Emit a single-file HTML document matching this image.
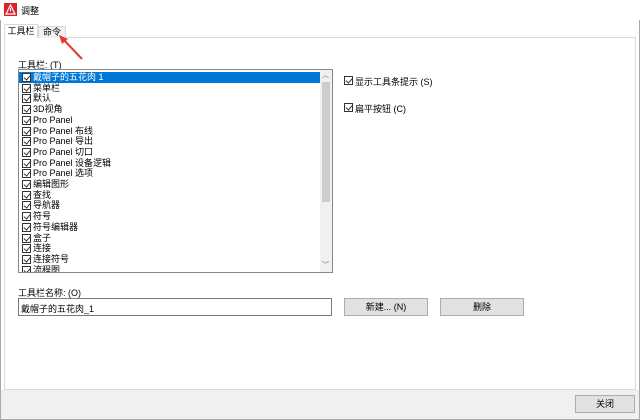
<!DOCTYPE html>
<html><head><meta charset="utf-8"><style>
*{margin:0;padding:0;box-sizing:border-box}
body{width:640px;height:420px;background:#fff;font-family:"Liberation Sans","Noto Sans CJK SC",sans-serif;font-size:9px;color:#000;position:relative;overflow:hidden}
.a{position:absolute;white-space:nowrap}
.cb{position:absolute;width:9px;height:9px;border:1px solid #333;background:#fff}
.cb:after{content:"";position:absolute;left:2px;top:0px;width:3px;height:5px;border:solid #333;border-width:0 1px 1px 0;transform:rotate(40deg)}
.item{position:absolute;left:2px;height:11px;line-height:11px;white-space:nowrap}
.item .cb{left:1px;top:1px}
.item span{position:absolute;left:12px;top:0}
.btn{position:absolute;background:#e1e1e1;border:1px solid #adadad;text-align:center;line-height:16px}
</style></head><body>
<svg class="a" style="left:4px;top:3px" width="13" height="13" viewBox="0 0 13 13"><rect width="13" height="13" fill="#d9232b"/><path d="M6.5 2 L11 11 L2 11 Z" fill="none" stroke="#fff" stroke-width="1.2"/><path d="M6.5 5v3.5" stroke="#fff" stroke-width="1.1"/></svg>
<div class="a" style="left:21px;top:4px">调整</div>
<div class="a" style="left:0;top:20px;width:640px;height:400px;background:#fff;border-left:1px solid #aaa;border-right:1px solid #aaa;border-bottom:1px solid #aaa"></div>
<div class="a" style="left:1px;top:390px;width:638px;height:29px;background:#f0f0f0"></div>
<div class="a" style="left:4px;top:37px;width:632px;height:353px;background:#fff;border:1px solid #d9d9d9"></div>
<div class="a" style="left:38px;top:26px;width:28px;height:12px;background:#f0f0f0;border:1px solid #d9d9d9;border-bottom:none;line-height:11px;text-align:center">命令</div>
<div class="a" style="left:4px;top:24px;width:34px;height:14px;background:#fff;border:1px solid #d9d9d9;border-bottom:none;line-height:13px;text-align:center">工具栏</div>
<svg class="a" style="left:55px;top:33px" width="30" height="30"><path d="M27 26 L7 5" stroke="#e53a2f" stroke-width="2"/><path d="M4 2 L13 6 L7 11 Z" fill="#e53a2f"/></svg>
<div class="a" style="left:18px;top:58px">工具栏: (T)</div>
<div class="a" style="left:18px;top:69px;width:315px;height:204px;border:1px solid #828790;background:#fff;overflow:hidden">
<div class="a" style="left:0;top:2px;width:301px;height:11px;background:#0078d7"></div>
<div class="item" style="top:2px;color:#fff"><div class="cb"></div><span>戴帽子的五花肉 1</span></div>
<div class="item" style="top:12.7px"><div class="cb"></div><span>菜单栏</span></div>
<div class="item" style="top:23.4px"><div class="cb"></div><span>默认</span></div>
<div class="item" style="top:34.1px"><div class="cb"></div><span>3D视角</span></div>
<div class="item" style="top:44.8px"><div class="cb"></div><span>Pro Panel</span></div>
<div class="item" style="top:55.5px"><div class="cb"></div><span>Pro Panel 布线</span></div>
<div class="item" style="top:66.2px"><div class="cb"></div><span>Pro Panel 导出</span></div>
<div class="item" style="top:76.9px"><div class="cb"></div><span>Pro Panel 切口</span></div>
<div class="item" style="top:87.6px"><div class="cb"></div><span>Pro Panel 设备逻辑</span></div>
<div class="item" style="top:98.3px"><div class="cb"></div><span>Pro Panel 选项</span></div>
<div class="item" style="top:109px"><div class="cb"></div><span>编辑图形</span></div>
<div class="item" style="top:119.7px"><div class="cb"></div><span>查找</span></div>
<div class="item" style="top:130.4px"><div class="cb"></div><span>导航器</span></div>
<div class="item" style="top:141.1px"><div class="cb"></div><span>符号</span></div>
<div class="item" style="top:151.8px"><div class="cb"></div><span>符号编辑器</span></div>
<div class="item" style="top:162.5px"><div class="cb"></div><span>盒子</span></div>
<div class="item" style="top:173.2px"><div class="cb"></div><span>连接</span></div>
<div class="item" style="top:183.9px"><div class="cb"></div><span>连接符号</span></div>
<div class="item" style="top:194.6px"><div class="cb"></div><span>流程图</span></div>
<div class="a" style="left:301px;top:0;width:12px;height:202px;background:#f0f0f0"></div>
<div class="a" style="left:303px;top:12px;width:8px;height:120px;background:#cdcdcd"></div>
<div class="a" style="left:303px;top:0;font-size:7px;color:#606060">︿</div>
<div class="a" style="left:303px;top:190px;font-size:7px;color:#606060">﹀</div>
</div>
<div class="cb" style="left:344px;top:76px"></div><div class="a" style="left:355px;top:75px">显示工具条提示 (S)</div>
<div class="cb" style="left:344px;top:103px"></div><div class="a" style="left:355px;top:102px">扁平按钮 (C)</div>
<div class="a" style="left:18px;top:286px">工具栏名称: (O)</div>
<div class="a" style="left:18px;top:298px;width:314px;height:18px;border:1px solid #7a7a7a;background:#fff;padding:3px 0 0 2px">戴帽子的五花肉_1</div>
<div class="btn" style="left:344px;top:298px;width:84px;height:18px">新建... (N)</div>
<div class="btn" style="left:440px;top:298px;width:84px;height:18px">删除</div>
<div class="btn" style="left:575px;top:395px;width:60px;height:18px">关闭</div>
</body></html>
